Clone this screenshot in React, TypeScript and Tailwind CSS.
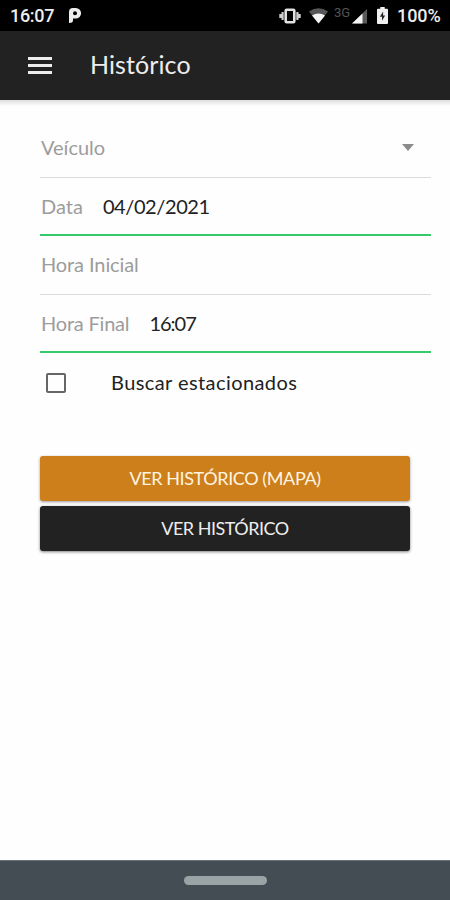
import React from 'react';

interface FieldProps {
  label: string;
  labelClass?: string;
  value?: string;
  valueClass?: string;
  className: string;
  children?: React.ReactNode;
}

const Field: React.FC<FieldProps> = ({ label, labelClass = '', value, valueClass = '', className, children }) => (
  <div className={`flex items-center pl-px text-[20px] ${className}`}>
    <span className={`whitespace-nowrap text-[#9c9c9c] ${labelClass}`}>{label}</span>
    {value && <span className={`ml-5 whitespace-nowrap text-[#222222] ${valueClass}`}>{value}</span>}
    {children}
  </div>
);

const StatusBar: React.FC = () => (
  <div className="flex h-[31px] items-center bg-black pl-[10px] pr-[10px] font-[Roboto,sans-serif] text-[18px] font-medium leading-none text-[#ededed]">
    <span className="w-[45px] whitespace-nowrap tracking-[-0.3px]">16:07</span>
    <svg className="ml-[13px]" width="14" height="17" viewBox="0 0 14 17">
      <path
        d="M1 5Q1 1 5 1H7.8A5.2 5.2 0 0 1 7.8 11.6H5V13.5Q5 16 1 16Z"
        fill="#ededed"
      />
      <circle cx="7" cy="6.2" r="2" fill="#000" />
    </svg>
    <svg className="ml-auto" width="22" height="18" viewBox="0 0 22 18">
      <rect x="6.7" y="2.7" width="8.6" height="12.6" rx="1" fill="none" stroke="#e2e2e2" strokeWidth="2.6" />
      <path d="M3.6 5v8M18.4 5v8M1.4 7v4M20.6 7v4" stroke="#cfcfcf" strokeWidth="2.2" />
    </svg>
    <svg className="ml-2" width="19" height="16" viewBox="0 0 19 16">
      <path d="M0 3.5Q9.5-3 19 3.5L9.5 15.5Z" fill="#575757" />
      <path d="M3 7.4Q9.5 3.4 16 7.4L9.5 15.5Z" fill="#f5f5f5" />
    </svg>
    <span className="mb-[6px] ml-[6px] w-[18px] text-[13px] font-normal text-[#555555]">3G</span>
    <svg className="mt-px" width="15" height="15" viewBox="0 0 15 15">
      <path d="M15 0V14.5H0Z" fill="#595959" />
      <path d="M10.5 4.4V14.5H0Z" fill="#f5f5f5" />
    </svg>
    <svg className="ml-[10px]" width="11" height="17" viewBox="0 0 11 17">
      <path d="M3.3 0h4.4v1.7H10Q11 1.7 11 2.8V16Q11 17 10 17H1Q0 17 0 16V2.8Q0 1.7 1 1.7H3.3Z" fill="#f0f0f0" />
      <path d="M6.1 4.5L2.9 9.8H5V13.8L8.1 8.5H6.1Z" fill="#222" />
    </svg>
    <span className="ml-[9px] w-[43px] whitespace-nowrap tracking-[-0.1px]">100%</span>
  </div>
);

const App: React.FC = () => {
  return (
    <div className="flex h-[900px] w-[450px] flex-col overflow-hidden bg-[#fefefe] font-[Lato,sans-serif]">
      <StatusBar />
      <header className="flex h-[69px] items-center bg-[#222222] pl-[28px]">
        <button aria-label="Menu" className="flex w-6 flex-col gap-1">
          <span className="h-[3px] bg-[#ededed]" />
          <span className="h-[3px] bg-[#ededed]" />
          <span className="h-[3px] bg-[#ededed]" />
        </button>
        <h1 className="ml-[38px] pb-0.5 text-[25px] tracking-[0.1px] text-[#ededed]">Histórico</h1>
      </header>
      <div className="h-[6px] bg-linear-to-b from-[#dedede] to-[#fefefe]" />

      <main className="flex flex-1 flex-col pl-[40px] pr-[19px] pt-[13px]">
        <Field label="Veículo" className="h-[59px] border-b border-[#dadada] pb-0.5">
          <span className="ml-auto mr-[17px] border-x-[6px] border-t-[7px] border-x-transparent border-t-[#8c8c8c]" />
        </Field>
        <Field
          label="Data"
          value="04/02/2021"
          valueClass="tracking-[-0.4px]"
          className="h-[58px] border-b-2 border-[#36cb6a] pb-px"
        />
        <Field label="Hora Inicial" labelClass="tracking-[-0.1px]" className="h-[59px] border-b border-[#dadada] pb-[3px]" />
        <Field
          label="Hora Final"
          labelClass="tracking-[-0.2px]"
          value="16:07"
          valueClass="tracking-[-1px]"
          className="h-[58px] border-b-2 border-[#36cb6a]"
        />
        <label className="flex h-[59px] items-center pl-[6px]">
          <span className="h-5 w-5 rounded-[2px] border-2 border-[#666666]" />
          <span className="ml-[45px] whitespace-nowrap pb-0.5 text-[20px] tracking-[0.42px] text-[#222222]">
            Buscar estacionados
          </span>
        </label>

        <div className="mt-[44px] flex w-[370px] flex-col gap-[5px]">
          <button className="h-[45px] rounded-[3px] bg-[#cc7f1b] text-[18px] tracking-[-0.4px] text-[#fff4e0] shadow-[0_1px_3px_rgba(0,0,0,0.4)]">
            VER HISTÓRICO (MAPA)
          </button>
          <button className="h-[45px] rounded-[3px] bg-[#222222] text-[18px] tracking-[-0.5px] text-[#ededed] shadow-[0_1px_3px_rgba(0,0,0,0.5)]">
            VER HISTÓRICO
          </button>
        </div>
      </main>

      <nav className="flex h-10 items-center justify-center border-t border-[#6b7276] bg-[#454d54]">
        <span className="h-[9px] w-[83px] rounded-full bg-[#9aa3a5]" />
      </nav>
    </div>
  );
};

export default App;
